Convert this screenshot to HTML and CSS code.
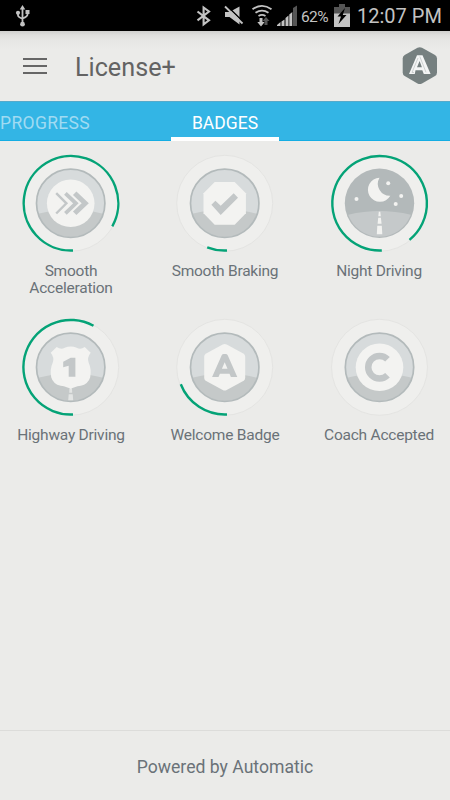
FILE: index.html
```html
<!DOCTYPE html>
<html lang="en">
<head>
<meta charset="utf-8">
<title>License+</title>
<link rel="stylesheet" href="styles.css">
</head>
<body>
<svg class="defs" width="0" height="0">
  <defs>
    <g id="base">
      <circle class="halo" r="48"/>
      <circle class="disc" r="34.2"/>
      <path class="shade" d="M-32.5 10.5Q0 2 32.5 10.5A34.2 34.2 0 0 1 -32.5 10.5Z"/>
      <circle class="rim" r="34.2"/>
    </g>
  </defs>
</svg>
<div class="status">
  <svg class="usb" width="15" height="22" viewBox="0 0 15 22"><path class="line" d="M7.500 3v15M3 7v3.200q0 1.800 4.500 3.500M12.500 7v2.500q0 2-4.900 4"/><path d="M7.500 0l2.800 4.500h-5.600zM10.500 5h4v4h-4z"/><circle cx="3" cy="7.800" r="2.100"/><circle cx="7.500" cy="19.200" r="2.400"/></svg>
  <svg class="icons" width="160" height="31" viewBox="195 0 160 31">
    <path class="line bt" d="M197.500 11.500l11.500 8.800-5.400 4V7.500l5.400 4-11.500 8.800"/>
    <path d="M225 12h4.500l10-5.500v18l-10-7.500H225z"/>
    <path class="cut" d="M226.500 5.500l17.500 17"/><path class="line" d="M225 6.500l17.500 17"/>
    <path class="line" d="M252.500 9.300q9.500-7 19 0M255.500 12.800q6.500-4.500 13 0M258.500 16q3.500-2.300 7 0"/>
    <path d="M259.500 18h3v4h2.200L261 26.500 257.300 22h2.200z"/><path class="dim" d="M264.500 25v-4h-2l3.500-4 3.500 4h-2v4z"/>
    <path class="dim" d="M293 8l4-2.500V26h-4z"/>
    <path d="M277 25l3.500-3v4H277zM281.500 21.500l3-2V26h-3zM285.500 18l3-2.500V26h-3zM289.300 14.500l3-2.500V26h-3z"/>
    <path class="dim" d="M334 7h5V4h6v3h5v7h-16z"/><path d="M334 13.500h16V27h-16z"/>
    <path class="bolt" d="M345 8l-7.500 8.500h3.500l-2.500 7.500 8-9h-3.700z"/>
  </svg>
  <span class="percent">62%</span>
  <span class="clock">12:07 PM</span>
</div>
<header class="bar">
  <span class="menu"><i></i><i></i><i></i></span>
  <h1>License+</h1>
  <svg class="logo" width="36" height="38" viewBox="0 0 36 38">
    <path class="hex" d="M15.500.8Q17.700-.2 20 .8L33 8q2 1.200 2 3.500v14q0 2.300-2 3.500L20 36.400q-2.300 1-4.500 0L2.700 29Q.7 27.800.7 25.500v-14Q.7 9.200 2.700 8z"/>
    <path class="letter" fill-rule="evenodd" d="M15 8.300h5.500L28.600 27h-6.800L20.300 23.300h-6.800L12.800 27H7zM17.600 14L15 20.300h4.900z"/>
    <path class="seam" d="M17.800 9.500l6.200 15.800M16 11L10 25.500h2"/>
  </svg>
</header>
<nav class="tabs"><span class="tab previous">PROGRESS</span><span class="tab active">BADGES</span></nav>
<main class="badges">
  <div class="badge">
    <svg viewBox="-49.700 -50.300 100 100"><use href="#base"/><path class="arc" d="M2.300 47.200A47.300 47.300 0 1 1 41.600 23"/>
      <circle class="pale" r="23.800"/><path class="chev thin" d="M-14.500-10.200L-4.300 0l-10.200 10.200"/><path class="chev mid" d="M-5.300-10L5.200 0l-10.500 10"/><path class="chev thick" d="M4-10L14.500 0 4 10"/></svg>
    <p>Smooth Acceleration</p>
  </div>
  <div class="badge">
    <svg viewBox="-49.700 -50.300 100 100"><use href="#base"/><path class="arc" d="M2.300 47.200A47.300 47.300 0 0 1-17.500 44"/>
      <path class="pale" d="M-10-21.300h20L21.200-10v20L10 21.500h-20L-21.200 10v-20z"/><path class="mark" d="M-13.300 1.500l4-4 5.300 5L9-10l4.300 4.500L-4 11.700z"/></svg>
    <p>Smooth Braking</p>
  </div>
  <div class="badge">
    <svg viewBox="-50.500 -50.300 100 100"><circle class="halo" r="48"/><path class="arc" d="M2.300 47.200A47.300 47.300 0 1 1 30 36.600"/>
      <circle class="night" r="34.700"/><path class="road" d="M-31.300 11.500Q0 4 31.300 11.500A33.300 33.300 0 0 1-31.300 11.500Z"/>
      <path class="pale" d="M0-25.500A12 12 0 1 0 10.800-7.500A12 12 0 0 1 0-25.500ZM-.7 8.500h1.500l.5 4.500h-2.500zM-1.300 14.500h2.700l.7 6h-4zM-2.200 22.500h4.500l.5 8.500h-5.500z"/>
      <g class="pale"><circle cx="8.700" cy="-20" r="2"/><circle cx="21.700" cy="-7.300" r="2"/><circle cx="16.200" cy=".8" r="2"/><circle cx="-23" cy="-4.400" r="2"/></g></svg>
    <p>Night Driving</p>
  </div>
  <div class="badge">
    <svg viewBox="-49.700 -50.300 100 100"><use href="#base"/><path class="arc" d="M2.300 47.200A47.300 47.300 0 1 1 22.800-41.500"/>
      <path class="pale" d="M-14-20.300Q-10-17.500-6-19.500Q0-22 6-19.500Q10-17.500 14-20.300L20-14.500Q16-9.500 18-4.500Q21 2 19.500 10Q17.500 17 10 18.500Q3 19.500 0 22Q-3 19.500-10 18.500Q-17.500 17-19.500 10Q-21 2-18-4.500Q-16-9.500-20-14.500Z"/>
      <path class="mark" d="M-7.500-5.500L0-9.500h4.700V9.500H-2v-11l-5.500 1.500z"/><path class="dash" d="M-1.300 21.500h2.600l.2 4h-3zM-2 27h4l.5 6h-5z"/></svg>
    <p>Highway Driving</p>
  </div>
  <div class="badge">
    <svg viewBox="-49.700 -50.300 100 100"><use href="#base"/><path class="arc" d="M2.300 47.200A47.300 47.300 0 0 1-43.900 17"/>
      <path class="pale" d="M-2-22.800Q0-23.800 2-22.800L19-13.500q1.500 1 1.500 3v21q0 2-1.500 3L2 22.800Q0 23.800-2 22.800L-19 13.500q-1.500-1-1.500-3v-21q0-2 1.500-3z"/>
      <path class="mark" fill-rule="evenodd" d="M-3-12Q-2.300-13.300-1-13.300h2Q2.300-13.300 3-12L12.600 9.700H6.200L4.800 6.500H-4.800L-6.200 9.700H-12.600zM0-5L-2.800 1.500h5.600z"/></svg>
    <p>Welcome Badge</p>
  </div>
  <div class="badge">
    <svg viewBox="-50.500 -50.300 100 100"><use href="#base"/><circle class="pale" r="23.800"/><path class="c" d="M8-8A11.300 11.300 0 1 0 8 8"/></svg>
    <p>Coach Accepted</p>
  </div>
</main>
<footer>Powered by Automatic</footer>
</body>
</html>
```
FILE: styles.css
```css
* { box-sizing: border-box; }
body {
  margin: 0;
  height: 800px;
  display: flex;
  flex-direction: column;
  overflow: hidden;
  background: #ebebe9;
  font-family: Roboto, sans-serif;
  color: #6a7278;
}
svg { display: block; flex: none; }
.defs { position: absolute; }
.status {
  height: 31px;
  flex: none;
  display: flex;
  align-items: center;
  background: #000;
  color: #c3c3c3;
  fill: #c3c3c3;
  white-space: nowrap;
}
.usb { margin-left: 15px; }
.icons { margin-left: 165px; }
.status .line { fill: none; stroke: #c3c3c3; stroke-width: 1.8; }
.status .bt { stroke-width: 2.100; }
.status .cut { stroke: #000; stroke-width: 1.500; }
.status .dim { fill: #555; }
.status .bolt { fill: #000; }
.percent { margin-left: -54px; width: 33px; font-size: 15.500px; letter-spacing: -0.600px; padding-top: 2px; }
.clock { margin-left: 23px; font-size: 20px; padding-top: 1px; }
.bar {
  height: 70px;
  flex: none;
  display: flex;
  align-items: center;
  padding: 0 12px 0 23px;
  background: linear-gradient(#cfcfcd 0, #dededc 4px, #e7e7e5 10px, #ebebe9 18px);
}
.menu { width: 24px; display: grid; gap: 4.500px; }
.menu i { height: 2.300px; background: #666; }
.bar h1 { margin: 3px auto 0 28px; font-size: 25.200px; font-weight: 400; color: #636363; }
.hex { fill: #768080; }
.letter { fill: #f4f5f5; }
.seam { fill: none; stroke: #bcc1c1; stroke-width: .7; }
.tabs {
  height: 40px;
  flex: none;
  display: flex;
  background: #33b5e5;
  border-bottom: 1px solid #14ade3;
  border-top: 1px solid #55aacb;
  font-size: 17.500px;
  line-height: 42px;
  color: #fff;
}
.previous { width: 171px; color: #a0dbf2; letter-spacing: .350px; }
.active { width: 108px; height: 39px; text-align: center; border-bottom: 4px solid #fff; }
.badges { flex: 1; display: grid; grid-template-columns: 142px 166px 142px; grid-auto-rows: 164px; padding-top: 12px; }
.badge { display: flex; flex-direction: column; align-items: center; }
.badge svg { width: 100px; height: 100px; }
.badge p { margin: 10px 0 0; width: 125px; text-align: center; font-size: 15.500px; letter-spacing: -0.230px; line-height: 17px; }
.halo { fill: #efefed; stroke: #e4e4e2; stroke-width: 1; }
.disc { fill: #d7dbdc; }
.shade { fill: #c5c9c9; }
.rim { fill: none; stroke: #b3babb; stroke-width: 1.700; }
.arc { fill: none; stroke: #04a377; stroke-width: 2.400; }
.pale { fill: #f3f3f1; }
.mark { fill: #c3c7c8; }
.dash { fill: #e3e5e4; }
.chev, .c { fill: none; stroke: #c3c7c8; }
.thin { stroke-width: 2.400; }
.mid { stroke-width: 3.800; }
.thick { stroke-width: 5; }
.c { stroke-width: 6.500; }
.night { fill: #b3b9ba; }
.road { fill: #c5c9ca; }
footer { height: 70px; flex: none; border-top: 1px solid #dcdcda; text-align: center; font-size: 17.600px; line-height: 72px; }
```
